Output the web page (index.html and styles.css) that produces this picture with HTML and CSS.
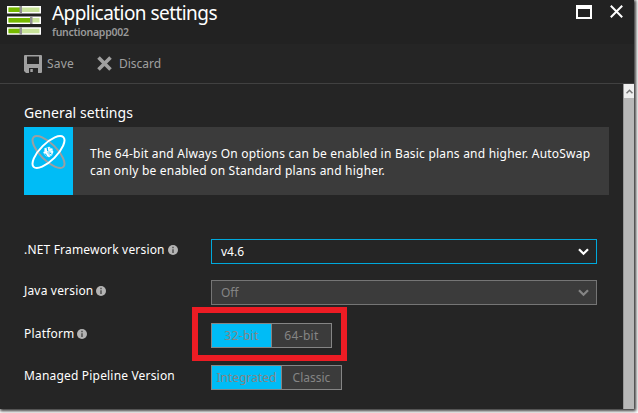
FILE: index.html
```html
<!DOCTYPE html>
<html lang="en">
<head>
<meta charset="utf-8">
<title>Application settings</title>
<link rel="stylesheet" href="styles.css">
</head>
<body>
<main class="blade">
  <header class="header">
    <svg class="app-icon" width="34" height="29" viewBox="0 0 34 29">
      <g fill="#fff"><path d="M0 0h34v7.5H0zM0 10.5h34V18H0zM0 21.2h34v7.5H0z"/></g>
      <path fill="#c8e39a" d="M1.5 1.5h31V6h-31zM1.5 12h31v4.5h-31zM1.5 22.7h31v4.5h-31z"/>
      <path fill="#76b900" d="M1.5 1.5H13V6H1.5zM1.5 12H23v4.5H1.5zM1.5 22.7H13v4.5H1.5z"/>
      <path fill="#929292" d="M12.5 0H15v7.5h-2.5zM23 10.5h2.5V18H23zM12.5 21.2H15v7.5h-2.5z"/>
    </svg>
    <div class="titles">
      <h1 class="title">Application settings</h1>
      <p class="subtitle">functionapp002</p>
    </div>
    <div class="window-actions">
      <svg width="16" height="14" viewBox="0 0 16 14"><path fill="#fff" fill-rule="evenodd" d="M0 0h16v14H0zM2 4v8h12V4z"/></svg>
      <svg width="13" height="13" viewBox="0 0 13 13"><path d="M.8.8l11.4 11.4M12.2.8L.8 12.2" stroke="#fff" stroke-width="2"/></svg>
    </div>
  </header>
  <nav class="toolbar">
    <span class="command save"><svg width="18" height="18" viewBox="0 0 18 18"><path fill="#a0a0a0" fill-rule="evenodd" d="M1 0h16q1 0 1 1v16q0 1-1 1h-3v-5H5v5H2l-2-2V1q0-1 1-1zM3 1.5V9h12V1.5z"/><path fill="#a0a0a0" d="M6.3 14h2.5v3H6.3z"/></svg><span class="save-label">Save</span></span>
    <span class="command discard"><svg width="15" height="15" viewBox="0 0 15 15"><path d="M1.5 1.5l12 12M13.5 1.5l-12 12" stroke="#a0a0a0" stroke-width="3.6"/></svg><span class="discard-label">Discard</span></span>
  </nav>
  <div class="body">
    <section class="content">
      <h2 class="section-title">General settings</h2>
      <div class="banner">
        <div class="banner-icon">
          <svg width="36" height="36" viewBox="0 0 36 36" fill="none">
            <ellipse cx="18.5" cy="18" rx="21" ry="8.3" transform="rotate(45 18.5 18)" stroke="#9c9fa1" stroke-width="2"/>
            <ellipse cx="18.5" cy="18" rx="21" ry="8.3" transform="rotate(-45 18.5 18)" stroke="#fff" stroke-width="2"/>
            <circle cx="18.5" cy="18" r="4.8" fill="#a8e5fb"/>
            <path d="M15 14l2.5 8M19.500 13l-4 5 4 5M22.500 15l-3 1 3 2-2 3M13.500 19l4-2" stroke="#fff" stroke-width="1.3"/>
            <path d="M17.500 14v3M19.500 19l2 1M15.500 20l1 2" stroke="#00bcf6"/>
          </svg>
        </div>
        <p class="message"><span class="line-one">The 64-bit and Always On options can be enabled in Basic plans and higher. AutoSwap</span><br><span class="line-two">can only be enabled on Standard plans and higher.</span></p>
      </div>
      <div class="settings">
        <div class="row net">
          <div class="label"><span class="net-label">.NET Framework version</span><svg class="info" viewBox="0 0 10 10"><circle cx="5" cy="5" r="5" fill="#b4b4b4"/><path fill="#555" d="M4.2 1.8h1.6v1.4H4.2zM4.2 4.200h1.600v3.800H4.200z"/></svg></div>
          <div class="select active"><span class="net-value">v4.6</span><svg width="11" height="8" viewBox="0 0 11 8"><path d="M1 1.3l4.5 4.4L10 1.3" fill="none" stroke="#fff" stroke-width="2.3"/></svg></div>
        </div>
        <div class="row java">
          <div class="label"><span class="java-label">Java version</span><svg class="info" viewBox="0 0 10 10"><circle cx="5" cy="5" r="5" fill="#b4b4b4"/><path fill="#555" d="M4.2 1.8h1.6v1.4H4.2zM4.2 4.200h1.600v3.800H4.200z"/></svg></div>
          <div class="select disabled"><span class="java-value">Off</span><svg width="11" height="8" viewBox="0 0 11 8"><path d="M1 1.3l4.5 4.4L10 1.3" fill="none" stroke="#858585" stroke-width="2.3"/></svg></div>
        </div>
        <div class="row platform">
          <div class="label"><span class="platform-label">Platform</span><svg class="info" viewBox="0 0 10 10"><circle cx="5" cy="5" r="5" fill="#b4b4b4"/><path fill="#555" d="M4.2 1.8h1.6v1.4H4.2zM4.2 4.200h1.600v3.800H4.200z"/></svg></div>
          <div class="toggle platform-toggle"><span class="option selected">32-bit</span><span class="option">64-bit</span><i class="highlight"></i></div>
        </div>
        <div class="row pipeline">
          <div class="label"><span class="pipeline-label">Managed Pipeline Version</span></div>
          <div class="toggle pipeline-toggle"><span class="option selected">Integrated</span><span class="option">Classic</span></div>
        </div>
      </div>
    </section>
    <aside class="scrollbar"><div class="scroll-up"><svg width="7" height="5" viewBox="0 0 7 5"><path d="M.5 4.3l3-3 3 3" fill="none" stroke="#777" stroke-width="1.6"/></svg></div></aside>
  </div>
</main>
</body>
</html>
```

FILE: styles.css
```css
* { box-sizing: border-box; }
body { margin: 0; width: 638px; height: 413px; overflow: hidden; background: #fff; font: 12px/17px "Noto Sans", "Open Sans", sans-serif; color: #fff; }
h1, h2, p { margin: 0; font-weight: 400; }
svg { display: block; flex: none; }
.blade { width: 634px; height: 409px; display: flex; flex-direction: column; background: #252525; box-shadow: 1px 1px 3px 1px #333; white-space: nowrap; }
.header { height: 44px; display: flex; background: #222; }
.app-icon { margin: 6px 0 0 7px; }
.titles { margin-left: 11px; flex: 1; }
.title { height: 26px; font-size: 19px; line-height: 26px; letter-spacing: -.55px; }
.subtitle { font-size: 10.5px; line-height: 13px; font-weight: 600; color: #999; letter-spacing: -.25px; }
.window-actions { display: flex; gap: 18px; margin: 5px 11px 0 0; }
.toolbar { height: 40px; display: flex; align-items: center; padding-left: 24px; border-bottom: 1px solid #414141; color: #a0a0a0; }
.command { display: flex; align-items: center; }
.save { width: 73px; gap: 5px; }
.save-label { letter-spacing: .2px; }
.discard { gap: 7px; }
.body { flex: 1; display: flex; min-height: 0; }
.content { width: 623px; padding: 19px 14px 0 24px; }
.section-title { font-size: 14px; line-height: 20px; height: 24px; letter-spacing: .1px; }
.banner { height: 68px; display: flex; background: #3b3b3b; }
.banner-icon { width: 49px; padding: 7px 6px; background: #00bcf6; }
.message { margin: 18px 0 0 17px; letter-spacing: .21px; }
.settings { margin-top: 44px; }
.row { height: 25px; display: flex; }
.net, .java { margin-bottom: 16px; }
.platform { margin: 18px 0 17px; }
.label { width: 187px; height: 21px; display: flex; align-items: center; gap: 3px; letter-spacing: .18px; }
.info { width: 10px; height: 10px; }
.select { width: 386px; height: 25px; padding: 0 7px 0 9px; display: flex; align-items: center; justify-content: space-between; border: 1px solid #00a9dc; }
.disabled { background: #3b3b3b; border-color: #757575; color: #858585; }
.toggle { position: relative; display: flex; border: 1px solid #858585; background: #3b3b3b; color: #858585; }
.platform-toggle { width: 121px; letter-spacing: .35px; }
.pipeline-toggle { width: 131px; }
.option { flex: 1; display: flex; align-items: center; justify-content: center; }
.selected { flex: none; width: 60px; background: #00bcf6; border-right: 1px solid #858585; }
.pipeline-toggle .selected { width: 70px; }
.highlight { position: absolute; left: -20px; top: -17px; width: 155px; height: 54px; border: 6px solid #ed1c24; }
.scrollbar { width: 11px; background: #b8b8b8; border-left: 1px solid #999; }
.scroll-up { height: 14px; background: #eee; display: flex; align-items: center; justify-content: center; }
```
